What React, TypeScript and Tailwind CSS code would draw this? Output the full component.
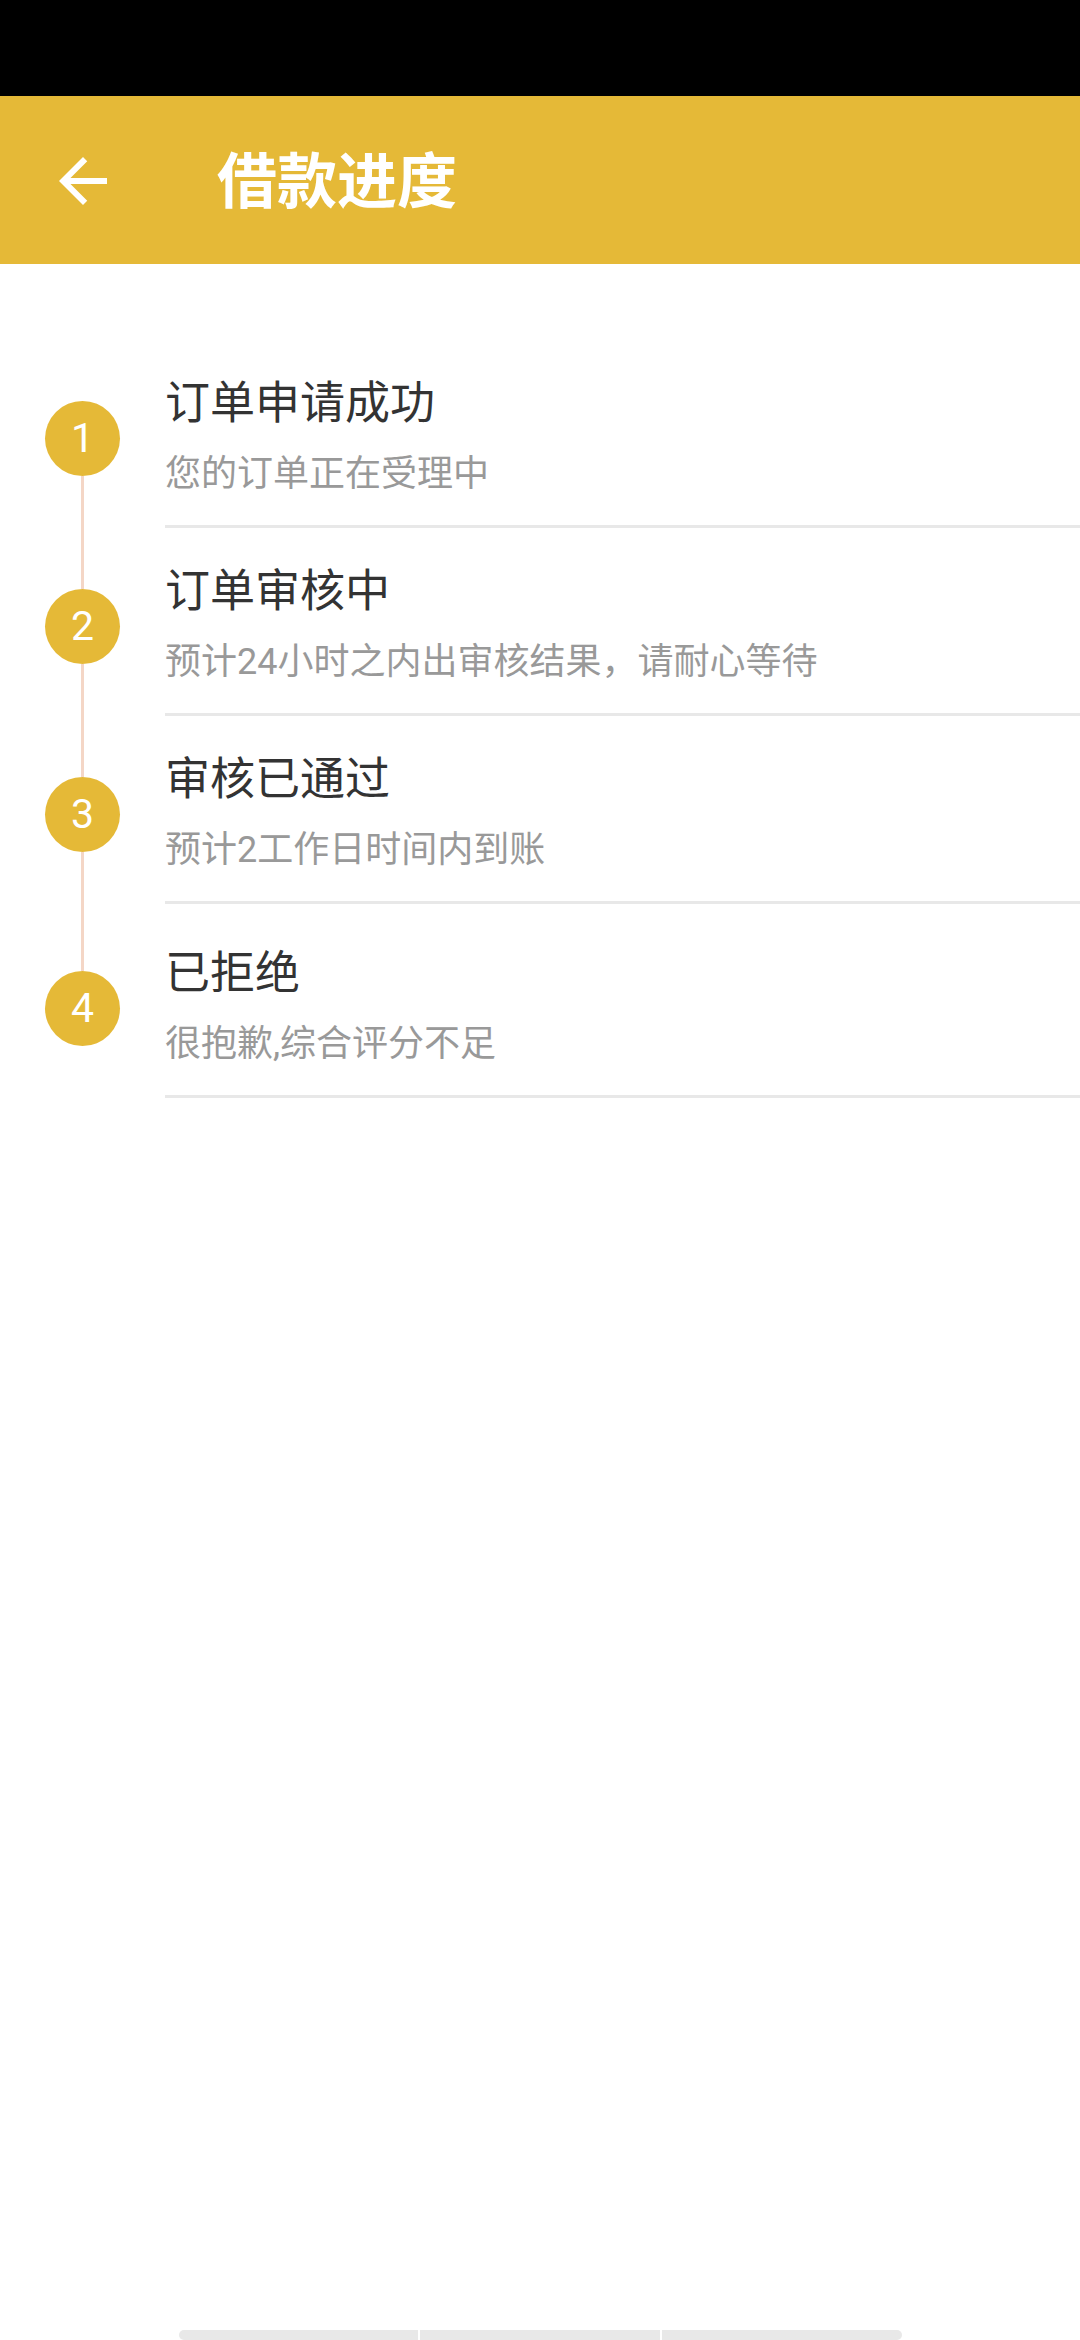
import React from 'react';

interface Step {
  no: number;
  title: string;
  desc: string;
  extraTop?: boolean;
}

const steps: Step[] = [
  { no: 1, title: '订单申请成功', desc: '您的订单正在受理中' },
  { no: 2, title: '订单审核中', desc: '预计24小时之内出审核结果，请耐心等待' },
  { no: 3, title: '审核已通过', desc: '预计2工作日时间内到账' },
  { no: 4, title: '已拒绝', desc: '很抱歉,综合评分不足', extraTop: true },
];

const App: React.FC = () => {
  return (
    <div
      className="min-h-[2340px] w-[1080px] bg-white flex flex-col"
      style={{ fontFamily: 'Roboto, "Noto Sans CJK SC", sans-serif' }}
    >
      {/* Status bar */}
      <div className="h-[96px] bg-black" />

      {/* Toolbar */}
      <div className="h-[168px] bg-[#E5B937] flex items-center pl-[47px]">
        <svg viewBox="0 0 24 24" className="w-[72px] h-[72px] fill-white mt-[2px]">
          <path d="M20 11H7.83l5.59-5.59L12 4l-8 8 8 8 1.41-1.41L7.83 13H20v-2z" />
        </svg>
        <h1 className="ml-[98px] mt-[5px] text-[60px] leading-none font-bold text-white">借款进度</h1>
      </div>

      {/* Timeline */}
      <div className="mt-[76px]">
        {steps.map((step, i) => {
          const first = i === 0;
          const last = i === steps.length - 1;
          return (
            <div key={step.no} className="flex">
              <div className="w-[165px] shrink-0 flex flex-col pl-[45px]">
                <div className="w-[75px] flex flex-col items-center flex-1">
                  <div
                    className={`w-[3px] ${step.extraTop ? 'h-[67px]' : 'h-[61px]'} ${first ? 'bg-transparent' : 'bg-[#F4D6C6]'}`}
                  />
                  <div className="w-[75px] h-[75px] rounded-full bg-[#E5B937] flex items-center justify-center text-white text-[41px] leading-none">
                    {step.no}
                  </div>
                  <div className={`w-[3px] flex-1 ${last ? 'bg-transparent' : 'bg-[#F4D6C6]'}`} />
                </div>
              </div>
              <div
                className={`flex-1 border-b-[3px] border-[#E8E8E8] ${step.extraTop ? 'pt-[40px]' : 'pt-[34px]'} pb-[27px]`}
              >
                <div className="text-[45px] leading-[60px] text-[#333333]">{step.title}</div>
                <div className="mt-[16px] text-[36px] leading-[48px] text-[#999999]">{step.desc}</div>
              </div>
            </div>
          );
        })}
      </div>

      {/* Bottom sheet edge */}
      <div className="mt-auto mx-auto flex gap-[2px] w-[723px] h-[10px]">
        <div className="flex-1 bg-[#E8E8E8] rounded-l-[6px]" />
        <div className="flex-1 bg-[#E8E8E8]" />
        <div className="flex-1 bg-[#E8E8E8] rounded-r-[6px]" />
      </div>
    </div>
  );
};

export default App;
